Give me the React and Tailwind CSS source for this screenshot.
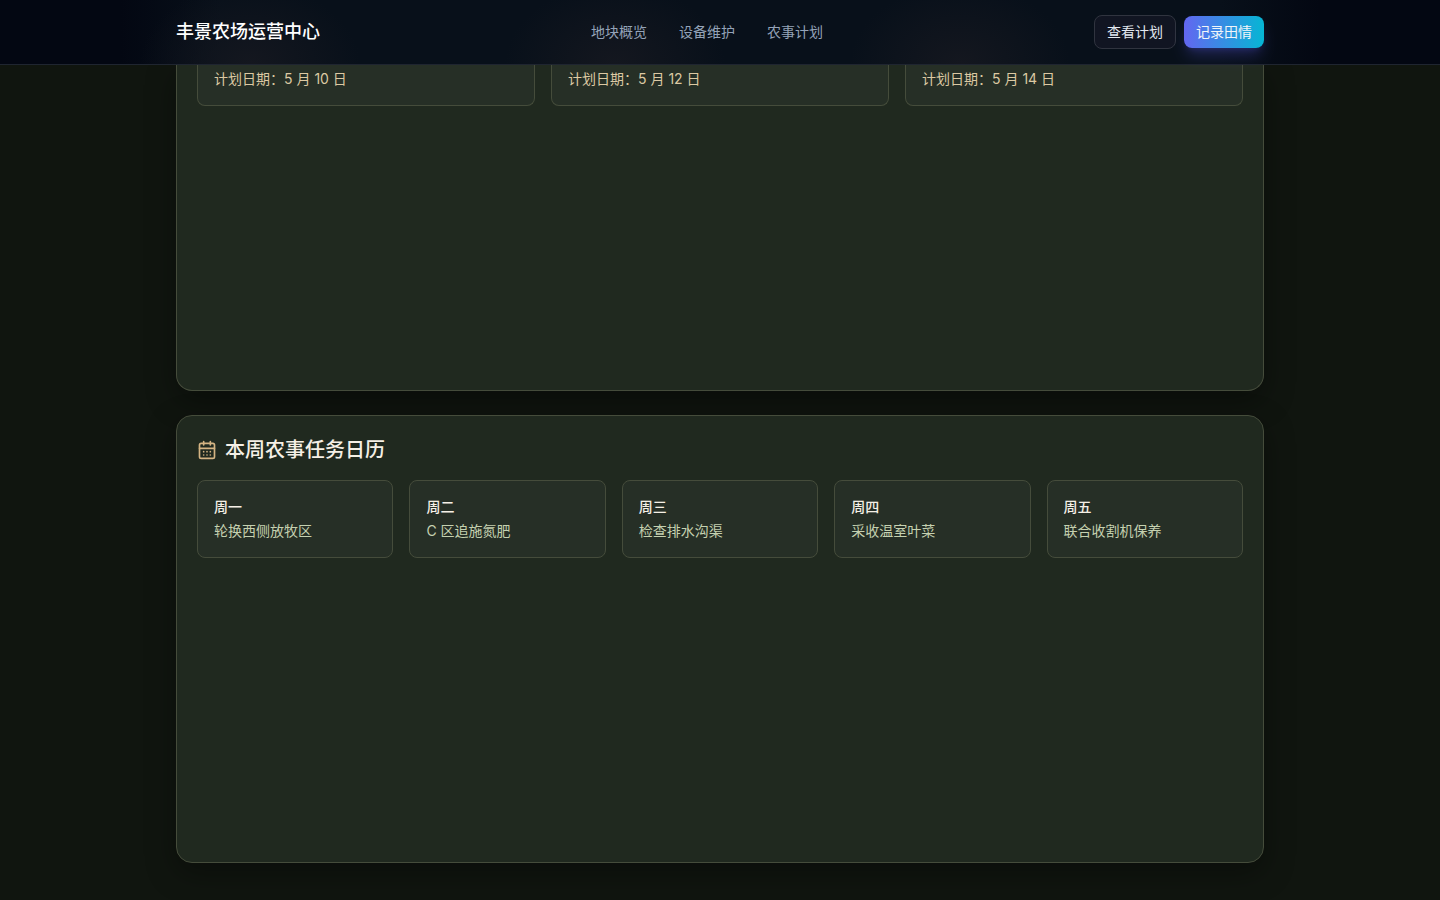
import React from "react";
import { CalendarDays } from "lucide-react";

const navLinks = [
  { href: "#fields", label: "地块概览" },
  { href: "#machines", label: "设备维护" },
  { href: "#calendar", label: "农事计划" },
];

const maintenance = ["5 月 10 日", "5 月 12 日", "5 月 14 日"];

const weekTasks = [
  { day: "周一", task: "轮换西侧放牧区" },
  { day: "周二", task: "C 区追施氮肥" },
  { day: "周三", task: "检查排水沟渠" },
  { day: "周四", task: "采收温室叶菜" },
  { day: "周五", task: "联合收割机保养" },
];

export default function App() {
  return (
    <div className="min-h-screen bg-[#10150f] font-[Inter,'Noto_Sans_CJK_SC',sans-serif] text-[#f5f0e6]">
      <Header />
      <main className="mx-auto flex max-w-[1136px] flex-col gap-6 px-6 pb-8">
        <section
          id="machines"
          className="min-h-[326px] rounded-b-2xl border border-t-0 border-[#454c3b] bg-[#20291f] px-5 shadow-[0_10px_30px_rgba(0,0,0,0.35)]"
        >
          <div className="grid grid-cols-3 gap-4">
            {maintenance.map((date) => (
              <div
                key={date}
                className="rounded-b-lg border border-t-0 border-[#454c3b] bg-[#262f26] px-4 pt-1 pb-4 text-sm text-[#dcc9a3]"
              >
                计划日期：{date}
              </div>
            ))}
          </div>
        </section>
        <section
          id="calendar"
          className="min-h-[448px] rounded-2xl border border-[#454c3b] bg-[#20291f] p-5 shadow-[0_10px_30px_rgba(0,0,0,0.35)]"
        >
          <h2 className="mb-4 flex items-center gap-2 text-xl font-medium">
            <CalendarDays className="h-5 w-5 text-[#d4b483]" />
            本周农事任务日历
          </h2>
          <div className="grid grid-cols-5 gap-4">
            {weekTasks.map((item) => (
              <div
                key={item.day}
                className="rounded-lg border border-[#454c3b] bg-[#262f26] p-4"
              >
                <h3 className="text-sm font-medium">{item.day}</h3>
                <p className="mt-1 text-sm text-[#c5d1b0]">{item.task}</p>
              </div>
            ))}
          </div>
        </section>
      </main>
    </div>
  );
}

function Header() {
  return (
    <header className="sticky top-0 z-10 border-b border-[#1f2530] bg-[#030712] bg-[linear-gradient(to_right,#030712_calc(50%_-_600px),#08101a_calc(50%_-_500px),#08101a_calc(50%_+_500px),#030712_calc(50%_+_600px))]">
      {/* soft glow sitting over each maintenance card */}
      <div className="bg-[radial-gradient(110px_80px_at_calc(50%_-_470px)_100%,#14171f,transparent),radial-gradient(110px_80px_at_calc(50%_-_105px)_100%,#14171f,transparent),radial-gradient(110px_80px_at_calc(50%_+_240px)_100%,#14171f,transparent)]">
        <div className="mx-auto flex h-16 max-w-[1136px] items-center justify-between px-6">
          <span className="text-lg font-medium text-white">
            丰景农场运营中心
          </span>
          <nav className="flex items-center gap-8 text-sm text-[#94a3b8]">
            {navLinks.map((link) => (
              <a key={link.href} href={link.href}>
                {link.label}
              </a>
            ))}
          </nav>
          <div className="flex items-center gap-2">
            <button className="rounded-lg border border-[#30343f] bg-[#111522] px-3 py-1.5 text-sm text-slate-200">
              查看计划
            </button>
            <button className="rounded-lg bg-[linear-gradient(to_right,#6366f1,#06b6d4)] px-3 py-1.5 text-sm text-slate-100 shadow-lg shadow-indigo-500/25">
              记录田情
            </button>
          </div>
        </div>
      </div>
    </header>
  );
}
